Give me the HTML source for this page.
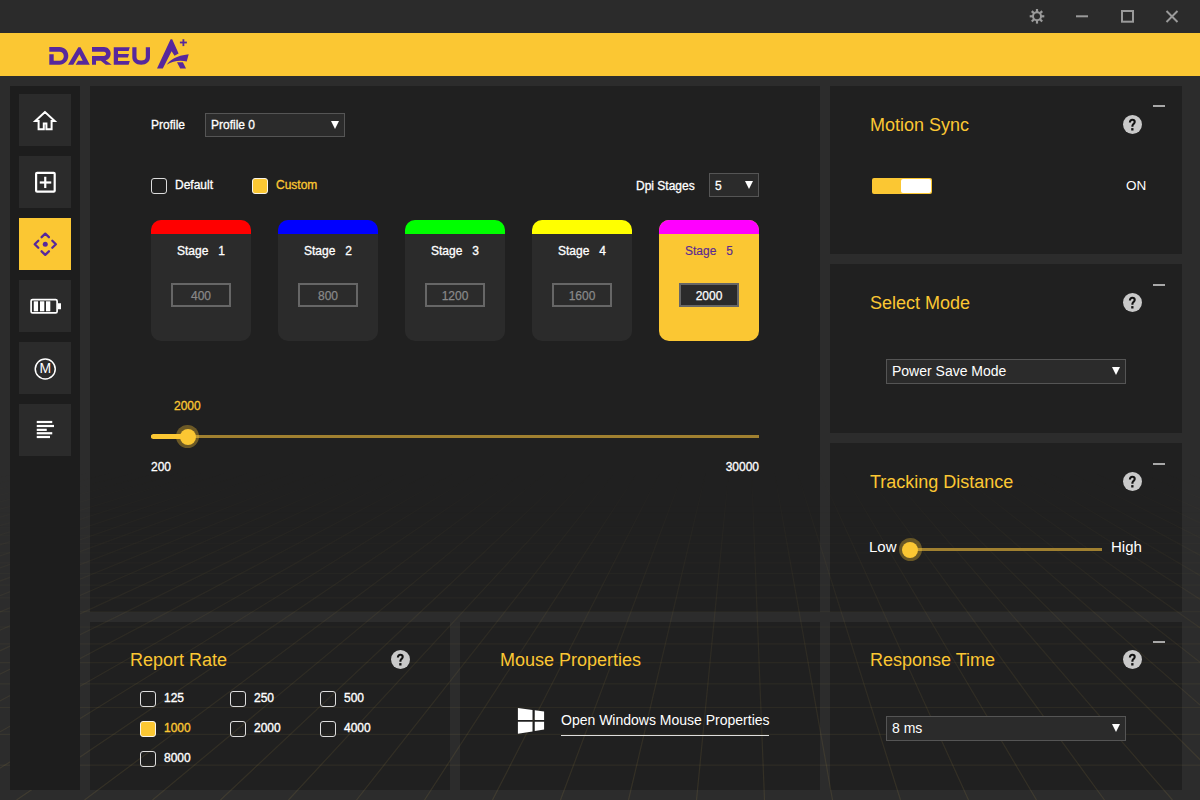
<!DOCTYPE html>
<html><head><meta charset="utf-8">
<style>
*{margin:0;padding:0;box-sizing:border-box}
html,body{width:1200px;height:800px;overflow:hidden;background:#2c2c2c;font-family:"Liberation Sans",sans-serif;color:#fff}
.a{position:absolute}
#title{left:0;top:0;width:1200px;height:33px;background:#2b2b2b}
#band{left:0;top:33px;width:1200px;height:43px;background:#fbc733}
.panel{position:absolute;background:#202020}
.sbtn{position:absolute;left:19px;width:52px;height:52px;background:#2b2b2b}
.sbtn.on{background:#fbc733}
.tx{position:absolute;white-space:pre;line-height:1}
.ttl{position:absolute;white-space:pre;line-height:1;font-size:18px;color:#fbc733}
.help{position:absolute;width:19px;height:19px;border-radius:50%;background:#c9c9c9;color:#111;font-weight:bold;font-size:14px;line-height:20px;text-align:center}
.dash{position:absolute;left:1153px;width:12px;height:2px;background:#a8a8a8}
.sel{position:absolute;background:#2b2b2b;border:1px solid #555}
.arr{position:absolute;width:0;height:0;border-left:4px solid transparent;border-right:4px solid transparent;border-top:8px solid #fff}
.cb{position:absolute;width:16px;height:16px;border:1.5px solid #ddd;border-radius:3px}
.cb.on{background:#fbc733;border-color:#f8f4ea}
.card{position:absolute;top:220px;width:100px;height:121px;background:#2b2b2b;border-radius:10px;overflow:hidden}
.card .bar{position:absolute;left:0;top:0;width:100px;height:14px}
.card .lbl{position:absolute;left:0;top:244px;width:100px;text-align:center}
.inp{position:absolute;-webkit-text-stroke:0.25px currentColor;left:20px;top:62.5px;width:60px;height:24px;border:2px solid #666;font-size:12px;line-height:23px;text-align:center;color:#888}
</style></head><body>
<div id="title" class="a"></div>
<div id="band" class="a"></div>

<div class="panel" style="left:90px;top:86px;width:730px;height:526px"></div>
<div class="panel" style="left:830px;top:86px;width:352px;height:168px"></div>
<div class="panel" style="left:830px;top:264px;width:352px;height:169px"></div>
<div class="panel" style="left:830px;top:443px;width:352px;height:169px"></div>
<div class="panel" style="left:830px;top:622px;width:352px;height:168px"></div>
<div class="panel" style="left:90px;top:622px;width:360px;height:168px"></div>
<div class="panel" style="left:460px;top:622px;width:360px;height:168px"></div>
<svg class="a" style="left:0;top:0;pointer-events:none" width="1200" height="800" viewBox="0 0 1200 800">
<defs><linearGradient id="gf" x1="0" y1="470" x2="0" y2="800" gradientUnits="userSpaceOnUse"><stop offset="0" stop-color="#fff" stop-opacity="0"/><stop offset="0.4" stop-color="#fff" stop-opacity="0.55"/><stop offset="1" stop-color="#fff" stop-opacity="1"/></linearGradient>
<mask id="gm" maskUnits="userSpaceOnUse" x="0" y="0" width="1200" height="800"><rect x="0" y="0" width="1200" height="800" fill="url(#gf)"/></mask><linearGradient id="gf2" x1="0" y1="500" x2="0" y2="800" gradientUnits="userSpaceOnUse"><stop offset="0" stop-color="#fff" stop-opacity="0"/><stop offset="0.45" stop-color="#fff" stop-opacity="0.6"/><stop offset="1" stop-color="#fff" stop-opacity="1"/></linearGradient><mask id="gm2" maskUnits="userSpaceOnUse" x="0" y="0" width="1200" height="800"><rect x="0" y="0" width="1200" height="800" fill="url(#gf2)"/></mask></defs>
<g fill="none" stroke-width="1.2">
<path mask="url(#gm)" d="M12.4,460L-1615.5,800M33.5,460L-1547.5,800M54.6,460L-1479.5,800M75.7,460L-1411.5,800M96.8,460L-1343.5,800M117.9,460L-1275.5,800M139.1,460L-1207.5,800M160.2,460L-1139.5,800M181.3,460L-1071.5,800M202.4,460L-1003.5,800M223.5,460L-935.5,800M244.6,460L-867.5,800M265.7,460L-799.5,800M286.8,460L-731.5,800M307.9,460L-663.5,800M329.0,460L-595.5,800M350.1,460L-527.5,800M371.2,460L-459.5,800M392.3,460L-391.5,800M413.4,460L-323.5,800M434.5,460L-255.5,800M455.6,460L-187.5,800M476.7,460L-119.5,800M497.8,460L-51.5,800M518.9,460L16.5,800M540.0,460L84.5,800M561.1,460L152.5,800M582.2,460L220.5,800M603.3,460L288.5,800M624.4,460L356.5,800M645.5,460L424.5,800M666.6,460L492.5,800M687.7,460L560.5,800M708.8,460L628.5,800M729.9,460L696.5,800M751.1,460L764.5,800M772.2,460L832.5,800M793.3,460L900.5,800M814.4,460L968.5,800M835.5,460L1036.5,800M856.6,460L1104.5,800M877.7,460L1172.5,800M898.8,460L1240.5,800M919.9,460L1308.5,800M941.0,460L1376.5,800M962.1,460L1444.5,800M983.2,460L1512.5,800M1004.3,460L1580.5,800M1025.4,460L1648.5,800M1046.5,460L1716.5,800M1067.6,460L1784.5,800M1088.7,460L1852.5,800M1109.8,460L1920.5,800M1130.9,460L1988.5,800M1152.0,460L2056.5,800M1173.1,460L2124.5,800M1194.2,460L2192.5,800" stroke="rgba(190,165,80,0.13)"/>
<path d="M0,800.6H1200M0,765.1H1200M0,734.4H1200M0,707.5H1200M0,683.8H1200M0,662.7H1200M0,643.9H1200M0,627.0H1200M0,611.7H1200M0,597.8H1200M0,585.1H1200M0,573.5H1200M0,562.8H1200M0,552.9H1200M0,543.7H1200M0,535.3H1200M0,527.4H1200M0,520.0H1200M0,513.1H1200M0,506.6H1200M0,500.6H1200M0,494.9H1200M0,489.5H1200M0,484.4H1200M0,479.6H1200M0,475.0H1200M0,470.7H1200M0,466.6H1200M0,462.7H1200" mask="url(#gm2)" stroke="rgba(190,165,80,0.10)"/>
</g>
</svg>
<div class="panel" style="left:10px;top:86px;width:70px;height:703.5px;background:#1d1d1d"></div>
<!-- title icons -->
<svg class="a" style="left:1000px;top:0" width="200" height="33" viewBox="1000 0 200 33">
  <g fill="#9a9a9a">
    <circle cx="1037" cy="16.3" r="5"/>
    <g stroke="#9a9a9a" stroke-width="2.2">
      <line x1="1037" y1="9" x2="1037" y2="23.6"/>
      <line x1="1029.7" y1="16.3" x2="1044.3" y2="16.3"/>
      <line x1="1031.8" y1="11.1" x2="1042.2" y2="21.5"/>
      <line x1="1042.2" y1="11.1" x2="1031.8" y2="21.5"/>
    </g>
  </g>
  <circle cx="1037" cy="16.3" r="3" fill="#2b2b2b"/>
  <rect x="1076" y="15.3" width="12" height="2" fill="#9a9a9a"/>
  <rect x="1122" y="11" width="11" height="10.7" fill="none" stroke="#9a9a9a" stroke-width="2"/>
  <g stroke="#9a9a9a" stroke-width="2"><line x1="1166.5" y1="11" x2="1177.5" y2="22"/><line x1="1177.5" y1="11" x2="1166.5" y2="22"/></g>
</svg>

<!-- logo -->
<svg class="a" style="left:0;top:0" width="200" height="80" viewBox="0 0 200 80">
 <g fill="#57289c">
  <path d="M49.3,47 H59.5 C64.6,47 68.3,50.9 68.3,55.85 C68.3,60.8 64.6,64.7 59.5,64.7 H49.3 V54.3 H53.7 V60.7 H59.5 C62,60.7 63.8,58.8 63.8,56.2 C63.8,53.6 62,51.7 59.5,51.7 H49.3 Z"/>
  <path d="M68,64.7 L78.3,47.3 H80.5 L89.8,64.7 H75.7 L78.1,60.7 H82.7 L79.4,54.3 L73.3,64.7 Z"/>
  <path d="M92,47 H104 C107.7,47 110.7,49.9 110.7,53.7 C110.7,56.9 108.5,59.4 105.6,60.3 L111.7,64.7 H105.8 L100.8,60.7 H96 V64.7 H92 V56 H104 C105.2,56 106.1,55 106.1,53.85 C106.1,52.7 105.2,51.7 104,51.7 H92 Z"/>
  <path d="M113.75,47.2 H129.8 L128.6,51 H118 V54 H129 L127.9,57.6 H118 V61 H129.8 L128.6,64.7 H113.75 Z"/>
  <path d="M132.3,47.2 H136.5 V57 C136.5,59.3 138.3,60.6 141.15,60.6 C144,60.6 145.8,59.3 145.8,57 V47.2 H150 V57 C150,61.6 146.4,64.7 141.15,64.7 C135.9,64.7 132.3,61.6 132.3,57 Z"/>
  <path d="M157,68.6 L170.6,39.2 H172.2 L178.6,53.5 L174.5,55.8 L171.6,51.3 L162.8,68.6 Z"/>
  <path d="M166.7,64.8 C170,60 176,55.5 188.7,54.2 L186.7,61.6 C181,60 173,60.5 166.7,64.8 Z"/>
  <path d="M177,62.3 H182.9 L186,68.6 H180.2 Z"/>
  <rect x="179.9" y="41.6" width="7" height="1.8"/>
  <rect x="182.5" y="39.2" width="1.8" height="6.9"/>
 </g>
</svg>

<!-- sidebar -->
<div class="sbtn" style="top:94px"></div>
<div class="sbtn" style="top:156px"></div>
<div class="sbtn on" style="top:218px"></div>
<div class="sbtn" style="top:280px"></div>
<div class="sbtn" style="top:342px"></div>
<div class="sbtn" style="top:404px"></div>
<svg class="a" style="left:0;top:80px" width="80" height="380" viewBox="0 80 80 380">
  <!-- home -->
  <path d="M45,112 L35.3,121 H38.6 V129.2 H43.8 V123.4 H46.4 V129.2 H51.6 V121 H54.7 Z" fill="none" stroke="#fff" stroke-width="2" stroke-linejoin="miter"/>
  <!-- plus box -->
  <rect x="36.1" y="172.85" width="18.6" height="18.8" rx="1" fill="none" stroke="#fff" stroke-width="2.2"/>
  <rect x="39.75" y="181.4" width="11.5" height="2.2" fill="#fff"/>
  <rect x="44.15" y="176.75" width="2.2" height="11.3" fill="#fff"/>
  <!-- move -->
  <g fill="none" stroke="#57289c" stroke-width="2.3" stroke-linecap="round" stroke-linejoin="round">
    <polyline points="41.6,237.2 45.25,233.7 48.9,237.2"/>
    <polyline points="41.6,251.3 45.25,254.8 48.9,251.3"/>
    <polyline points="38.3,240.7 34.7,244.25 38.3,247.8"/>
    <polyline points="52.3,240.7 55.9,244.25 52.3,247.8"/>
  </g>
  <circle cx="45.25" cy="244.25" r="2.5" fill="#57289c"/>
  <!-- battery -->
  <rect x="31.1" y="299.6" width="26" height="13.3" rx="1.5" fill="none" stroke="#fff" stroke-width="1.7"/>
  <rect x="58" y="303.25" width="3" height="6" fill="#fff"/>
  <rect x="33.75" y="301.3" width="4.3" height="10" fill="#fff"/>
  <rect x="40" y="301.3" width="4.3" height="10" fill="#fff"/>
  <rect x="46" y="301.3" width="4.3" height="10" fill="#fff"/>
  <!-- M -->
  <circle cx="45.25" cy="369" r="10" fill="none" stroke="#fff" stroke-width="1.5"/>
  <!-- lines -->
  <g fill="#fff">
    <rect x="36.75" y="420.9" width="15.5" height="2.2"/>
    <rect x="36.75" y="424.9" width="17.25" height="2.2"/>
    <rect x="36.75" y="428.75" width="10" height="2.2"/>
    <rect x="36.75" y="432.15" width="15.5" height="2.2"/>
    <rect x="36.75" y="435.9" width="13.25" height="2.2"/>
  </g>
</svg>
<div class="tx" style="left:39.5px;top:361px;font-size:14px;color:#fff">M</div>

<!-- main panel -->
<div class="tx" style="left:151px;top:119px;font-size:12px;-webkit-text-stroke:0.3px #fff">Profile</div>
<div class="sel" style="left:205px;top:113px;width:140px;height:24px"></div>
<div class="tx" style="left:211px;top:119px;font-size:12px;-webkit-text-stroke:0.3px #fff">Profile 0</div>
<div class="arr" style="left:331px;top:121px"></div>

<div class="cb" style="left:151px;top:178px"></div>
<div class="tx" style="left:175px;top:179px;font-size:12px;-webkit-text-stroke:0.3px #fff">Default</div>
<div class="cb on" style="left:252px;top:178px"></div>
<div class="tx" style="left:276px;top:179px;font-size:12px;color:#fbc733;-webkit-text-stroke:0.3px #fbc733">Custom</div>

<div class="tx" style="left:636px;top:180px;font-size:12px;-webkit-text-stroke:0.3px #fff">Dpi Stages</div>
<div class="sel" style="left:709px;top:173px;width:50px;height:24px"></div>
<div class="tx" style="left:715px;top:180px;font-size:12px;-webkit-text-stroke:0.3px #fff">5</div>
<div class="arr" style="left:745px;top:181px"></div>

<div class="card" style="left:151px"><div class="bar" style="background:#f00"></div><div class="tx" style="left:0;top:25px;width:100px;text-align:center;font-size:12px;-webkit-text-stroke:0.3px #fff">Stage   1</div><div class="inp">400</div></div>
<div class="card" style="left:278px"><div class="bar" style="background:#00f"></div><div class="tx" style="left:0;top:25px;width:100px;text-align:center;font-size:12px;-webkit-text-stroke:0.3px #fff">Stage   2</div><div class="inp">800</div></div>
<div class="card" style="left:405px"><div class="bar" style="background:#0f0"></div><div class="tx" style="left:0;top:25px;width:100px;text-align:center;font-size:12px;-webkit-text-stroke:0.3px #fff">Stage   3</div><div class="inp">1200</div></div>
<div class="card" style="left:532px"><div class="bar" style="background:#ff0"></div><div class="tx" style="left:0;top:25px;width:100px;text-align:center;font-size:12px;-webkit-text-stroke:0.3px #fff">Stage   4</div><div class="inp">1600</div></div>
<div class="card" style="left:659px;background:#fbc733"><div class="bar" style="background:#f0f"></div><div class="tx" style="left:0;top:25px;width:100px;text-align:center;font-size:12px;color:#5a2a92;-webkit-text-stroke:0.15px #5a2a92">Stage   5</div><div class="inp" style="background:#2b2b2b;color:#fff">2000</div></div>

<div class="tx" style="left:174px;top:400px;font-size:12px;color:#fbc733;-webkit-text-stroke:0.3px #fbc733">2000</div>
<div class="a" style="left:151px;top:434.5px;width:608px;height:3px;background:#a08030"></div>
<div class="a" style="left:151px;top:433.5px;width:38px;height:5px;border-radius:2.5px;background:#fbc733"></div>
<div class="a" style="left:176px;top:425px;width:23px;height:23px;border-radius:50%;background:rgba(251,199,51,0.35)"></div>
<div class="a" style="left:179.5px;top:428.5px;width:16px;height:16px;border-radius:50%;background:#fbc733"></div>
<div class="tx" style="left:151px;top:461px;font-size:12px;-webkit-text-stroke:0.3px #fff">200</div>
<div class="tx" style="left:659px;top:461px;width:100px;text-align:right;font-size:12px;-webkit-text-stroke:0.3px #fff">30000</div>

<!-- right panels -->
<div class="ttl" style="left:870px;top:116px">Motion Sync</div>
<svg class="a" style="left:1123px;top:115px" width="19" height="19" viewBox="0 0 19 19"><circle cx="9.5" cy="9.5" r="9.5" fill="#c9c9c9"/><path d="M6.9,7.6 C6.9,5.6 8,4.8 9.3,4.8 C10.7,4.8 11.7,5.7 11.7,7 C11.7,8.4 10.3,8.9 9.8,9.8 C9.5,10.3 9.4,10.8 9.4,11.8" stroke="#111" stroke-width="2.1" fill="none"/><rect x="8.2" y="13.1" width="2.3" height="2.4" fill="#111"/></svg>
<div class="dash" style="top:105px"></div>
<div class="a" style="left:872px;top:177.5px;width:60px;height:16px;border-radius:2px;background:#fbc733"></div>
<div class="a" style="left:901px;top:179px;width:30px;height:13.5px;border-radius:2px;background:#fff"></div>
<div class="tx" style="left:1126px;top:178.6px;font-size:13.5px">ON</div>

<div class="ttl" style="left:870px;top:294px">Select Mode</div>
<svg class="a" style="left:1123px;top:293px" width="19" height="19" viewBox="0 0 19 19"><circle cx="9.5" cy="9.5" r="9.5" fill="#c9c9c9"/><path d="M6.9,7.6 C6.9,5.6 8,4.8 9.3,4.8 C10.7,4.8 11.7,5.7 11.7,7 C11.7,8.4 10.3,8.9 9.8,9.8 C9.5,10.3 9.4,10.8 9.4,11.8" stroke="#111" stroke-width="2.1" fill="none"/><rect x="8.2" y="13.1" width="2.3" height="2.4" fill="#111"/></svg>
<div class="dash" style="top:284px"></div>
<div class="sel" style="left:886px;top:359px;width:240px;height:25px"></div>
<div class="tx" style="left:892px;top:364px;font-size:14px">Power Save Mode</div>
<div class="arr" style="left:1112px;top:367px"></div>

<div class="ttl" style="left:870px;top:473px">Tracking Distance</div>
<svg class="a" style="left:1123px;top:472px" width="19" height="19" viewBox="0 0 19 19"><circle cx="9.5" cy="9.5" r="9.5" fill="#c9c9c9"/><path d="M6.9,7.6 C6.9,5.6 8,4.8 9.3,4.8 C10.7,4.8 11.7,5.7 11.7,7 C11.7,8.4 10.3,8.9 9.8,9.8 C9.5,10.3 9.4,10.8 9.4,11.8" stroke="#111" stroke-width="2.1" fill="none"/><rect x="8.2" y="13.1" width="2.3" height="2.4" fill="#111"/></svg>
<div class="dash" style="top:463px"></div>
<div class="tx" style="left:869px;top:539px;font-size:15px">Low</div>
<div class="a" style="left:910px;top:547.5px;width:192px;height:3px;background:#a08030"></div>
<div class="a" style="left:898.5px;top:538px;width:23px;height:23px;border-radius:50%;background:rgba(251,199,51,0.33)"></div>
<div class="a" style="left:902px;top:541.5px;width:16px;height:16px;border-radius:50%;background:#fbc733"></div>
<div class="tx" style="left:1111px;top:539px;font-size:15px">High</div>

<div class="ttl" style="left:870px;top:651px">Response Time</div>
<svg class="a" style="left:1123px;top:650px" width="19" height="19" viewBox="0 0 19 19"><circle cx="9.5" cy="9.5" r="9.5" fill="#c9c9c9"/><path d="M6.9,7.6 C6.9,5.6 8,4.8 9.3,4.8 C10.7,4.8 11.7,5.7 11.7,7 C11.7,8.4 10.3,8.9 9.8,9.8 C9.5,10.3 9.4,10.8 9.4,11.8" stroke="#111" stroke-width="2.1" fill="none"/><rect x="8.2" y="13.1" width="2.3" height="2.4" fill="#111"/></svg>
<div class="dash" style="top:641px"></div>
<div class="sel" style="left:886px;top:716px;width:240px;height:25px"></div>
<div class="tx" style="left:892px;top:721px;font-size:14px">8 ms</div>
<div class="arr" style="left:1112px;top:724px"></div>

<!-- bottom panels -->
<div class="ttl" style="left:130px;top:651px">Report Rate</div>
<svg class="a" style="left:391px;top:650px" width="19" height="19" viewBox="0 0 19 19"><circle cx="9.5" cy="9.5" r="9.5" fill="#c9c9c9"/><path d="M6.9,7.6 C6.9,5.6 8,4.8 9.3,4.8 C10.7,4.8 11.7,5.7 11.7,7 C11.7,8.4 10.3,8.9 9.8,9.8 C9.5,10.3 9.4,10.8 9.4,11.8" stroke="#111" stroke-width="2.1" fill="none"/><rect x="8.2" y="13.1" width="2.3" height="2.4" fill="#111"/></svg>
<div class="cb" style="left:140px;top:691px"></div><div class="tx" style="left:164px;top:692.3px;font-size:12px;-webkit-text-stroke:0.35px #fff">125</div>
<div class="cb" style="left:230px;top:691px"></div><div class="tx" style="left:254px;top:692.3px;font-size:12px;-webkit-text-stroke:0.35px #fff">250</div>
<div class="cb" style="left:320px;top:691px"></div><div class="tx" style="left:344px;top:692.3px;font-size:12px;-webkit-text-stroke:0.35px #fff">500</div>
<div class="cb on" style="left:140px;top:721px"></div><div class="tx" style="left:164px;top:722.3px;font-size:12px;color:#fbc733;-webkit-text-stroke:0.35px #fbc733">1000</div>
<div class="cb" style="left:230px;top:721px"></div><div class="tx" style="left:254px;top:722.3px;font-size:12px;-webkit-text-stroke:0.35px #fff">2000</div>
<div class="cb" style="left:320px;top:721px"></div><div class="tx" style="left:344px;top:722.3px;font-size:12px;-webkit-text-stroke:0.35px #fff">4000</div>
<div class="cb" style="left:140px;top:751px"></div><div class="tx" style="left:164px;top:752.3px;font-size:12px;-webkit-text-stroke:0.35px #fff">8000</div>

<div class="ttl" style="left:500px;top:651px">Mouse Properties</div>
<svg class="a" style="left:517px;top:707px" width="28" height="28" viewBox="0 0 28 28">
  <path d="M0.9,0.9 L15.5,2.96 V12.9 H0.9 Z M17.75,3.28 L27.1,4.6 V12.9 H17.75 Z M0.9,14.75 H15.5 V24.44 L0.9,26.75 Z M17.75,14.75 H27.1 V22.6 L17.75,24.08 Z" fill="#fff"/>
</svg>
<div class="tx" style="left:561px;top:713px;font-size:14px">Open Windows Mouse Properties</div>
<div class="a" style="left:561px;top:734.6px;width:208px;height:1.4px;background:#ddd"></div>

</body></html>
